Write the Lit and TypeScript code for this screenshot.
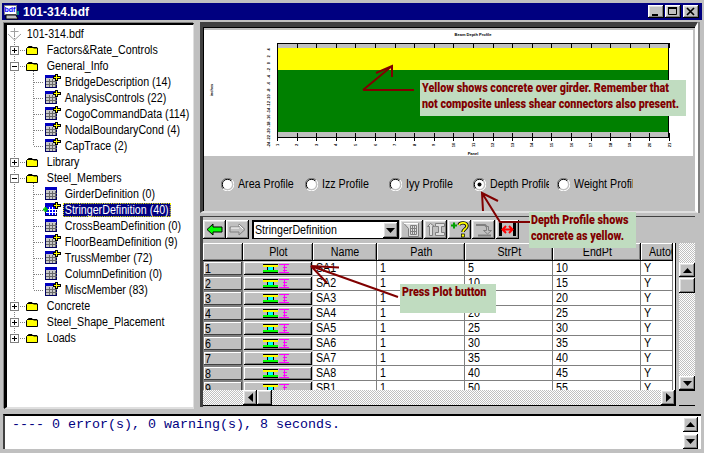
import { LitElement, html, css, svg } from "lit";
import { customElement } from "lit/decorators.js";

type TreeRow = { l: number; t: string; k: string; last?: boolean; sel?: boolean };

const TREE: TreeRow[] = [
  { l: 0, t: "101-314.bdf", k: "root" },
  { l: 1, t: "Factors&Rate_Controls", k: "plus" },
  { l: 1, t: "General_Info", k: "minus" },
  { l: 2, t: "BridgeDescription (14)", k: "tp" },
  { l: 2, t: "AnalysisControls (22)", k: "tp" },
  { l: 2, t: "CogoCommandData (114)", k: "tp" },
  { l: 2, t: "NodalBoundaryCond (4)", k: "tp" },
  { l: 2, t: "CapTrace (2)", k: "tp", last: true },
  { l: 1, t: "Library", k: "plus" },
  { l: 1, t: "Steel_Members", k: "minus" },
  { l: 2, t: "GirderDefinition (0)", k: "t" },
  { l: 2, t: "StringerDefinition (40)", k: "s", sel: true },
  { l: 2, t: "CrossBeamDefinition (0)", k: "t" },
  { l: 2, t: "FloorBeamDefinition (9)", k: "tp" },
  { l: 2, t: "TrussMember (72)", k: "tp" },
  { l: 2, t: "ColumnDefinition (0)", k: "t" },
  { l: 2, t: "MiscMember (83)", k: "tp", last: true },
  { l: 1, t: "Concrete", k: "plus" },
  { l: 1, t: "Steel_Shape_Placement", k: "plus" },
  { l: 1, t: "Loads", k: "plus", last: true },
];

const ROWS = [
  ["1", "SA1", "1", "5", "10", "Y"],
  ["2", "SA2", "1", "10", "15", "Y"],
  ["3", "SA3", "1", "15", "20", "Y"],
  ["4", "SA4", "1", "20", "25", "Y"],
  ["5", "SA5", "1", "25", "30", "Y"],
  ["6", "SA6", "1", "30", "35", "Y"],
  ["7", "SA7", "1", "35", "40", "Y"],
  ["8", "SA8", "1", "40", "45", "Y"],
  ["9", "SB1", "1", "50", "55", "Y"],
];

const GUIDE = "#808080";

function tableIcon(k: string) {
  const x = 37;
  const blue = k === "s";
  const line = blue ? "#ffffff" : "#686868";
  const cells = [];
  for (let i = 1; i < 4; i++) cells.push(svg`<path d="M${x + 2.5 + i * 3} 5V13" stroke="${line}"/>`);
  for (let i = 1; i < 3; i++) cells.push(svg`<path d="M${x + 2} ${4.5 + i * 3}H${x + 13}" stroke="${line}"/>`);
  return svg`
    <rect x="${x + 1.5}" y="1.5" width="11" height="12" fill="${blue ? "#0000ff" : "#c8c8c8"}" stroke="#000060"/>
    <rect x="${x + 1}" y="1" width="12" height="3" fill="#0000c0"/>
    ${cells}
    ${k !== "t"
      ? svg`<path d="M${x + 9} 3.500H${x + 17}M${x + 12.5} 0V7" stroke="#000" stroke-width="3"/><path d="M${x + 10} 3.500H${x + 16}M${x + 12.5} 1V6" stroke="#ffff00"/>`
      : ""}
    ${k === "s"
      ? svg`<path d="M${x - 1} 7.500H${x + 4}M${x + 1.5} 5V10" stroke="#00c000" stroke-width="2"/>`
      : ""}
  `;
}

function folder() {
  return svg`<path d="M19.500 12.500V6.500L21.500 4.500H25L26.500 6H30.500V12.500Z" fill="#ffff00" stroke="#000"/><path d="M20 5.500H30" stroke="#000" stroke-width="1"/>`;
}

function treeGlyph(r: TreeRow, i: number) {
  const n = TREE.length;
  const h = 16;
  const first = i === 0;
  const lastRow = i === n - 1;
  const parts = [];
  parts.push(svg`<path d="M7.500 ${first ? 10 : 0}V${lastRow ? 8 : h}" stroke="${GUIDE}" stroke-dasharray="1 1"/>`);
  if (r.l === 0) {
    parts.push(svg`<path d="M7.500 2V10M3.500 5.500H11.500M1 8L7.500 14L14 8" fill="none" stroke="#a0a0a0"/>`);
  }
  if (r.l === 1) {
    parts.push(svg`<path d="M11 8.500H19" stroke="${GUIDE}" stroke-dasharray="1 1"/>`);
    parts.push(svg`<rect x="3.500" y="4.500" width="8" height="8" fill="#fff" stroke="#808080"/>`);
    parts.push(svg`<path d="M5 8.500H10" stroke="#000"/>`);
    if (r.k === "plus") parts.push(svg`<path d="M7.500 6V11" stroke="#000"/>`);
    parts.push(folder());
    if (r.k === "minus") parts.push(svg`<path d="M26.500 13V16" stroke="${GUIDE}" stroke-dasharray="1 1"/>`);
  }
  if (r.l === 2) {
    parts.push(svg`<path d="M26.500 0V${r.last ? 8 : h}M27 8.500H37" stroke="${GUIDE}" stroke-dasharray="1 1"/>`);
    parts.push(tableIcon(r.k));
  }
  return svg`<svg class="glyph l${r.l}" viewBox="0 0 ${[18, 38, 56][r.l]} 16">${parts}</svg>`;
}

function plotIcon() {
  return html`<svg class="pi" viewBox="0 0 27 9" shape-rendering="crispEdges">
    <rect x="0" y="0" width="15" height="1" fill="#000"/>
    <rect x="0" y="1" width="15" height="2" fill="#ffff00"/>
    <rect x="5" y="3" width="5" height="3" fill="#00ffff"/>
    <path d="M4.500 3V6M10.500 3V6" stroke="#000"/>
    <rect x="0" y="6" width="15" height="2" fill="#00ff00"/>
    <rect x="0" y="8" width="15" height="1" fill="#000"/>
    <path d="M16 0.500H26M16 8.500H26M21.500 1V8M19.500 3H23.500M19.500 6H23.500" fill="none" stroke="#ff00ff"/>
  </svg>`;
}

function radio(on: boolean) {
  return html`<svg class="rd" viewBox="0 0 13 13">
    <path d="M2 11A6 6 0 0 1 11 2" fill="none" stroke="#808080"/>
    <path d="M2.800 10.200A5 5 0 0 1 10.200 2.800" fill="none" stroke="#000"/>
    <circle cx="6.500" cy="6.500" r="4.500" fill="#fff"/>
    <path d="M11 2A6 6 0 0 1 2 11" fill="none" stroke="#fff"/>
    ${on ? svg`<circle cx="6.500" cy="6.500" r="2" fill="#000"/>` : ""}
  </svg>`;
}

function chart() {
  const X0 = 73, X1 = 465, Y0 = 13, Y1 = 108;
  const xs = Array.from({ length: 21 }, (_, i) => X0 + (i * (X1 - X0)) / 20);
  const ys = Array.from({ length: 15 }, (_, i) => 18 + i * 6.8);
  return html`<svg class="chart" viewBox="0 0 489 126">
    <rect x="${X0}" y="${Y0}" width="${X1 - X0}" height="${Y1 - Y0}" fill="#c0c0c0"/>
    <rect x="${X0}" y="18" width="${X1 - X0}" height="22" fill="#ffff00"/>
    <rect x="${X0}" y="40" width="${X1 - X0}" height="62" fill="#008000"/>
    <path d="M${X0} ${Y0 + 0.5}H${X1}M${X1 - 0.5} ${Y0}V${Y1}M${X0} ${Y1 - 0.5}H${X1}M${X0 + 0.5} ${Y0}V${Y1}" stroke="#000" fill="none"/>
    ${xs.map((x) => svg`<path d="M${Math.round(x) + 0.5} ${Y0}V${Y0 + 5}M${Math.round(x) + 0.5} ${Y1 - 5}V${Y1 + 3}" stroke="#000"/>`)}
    ${ys.map((y, i) => svg`<text class="tick" transform="translate(66 ${y + 1.5}) rotate(-90)" text-anchor="middle">${4 - i * 2}</text>`)}
    ${xs.map((x, i) => svg`<text class="tick" transform="translate(${x + 1.5} 115) rotate(-90)" text-anchor="middle">${i + 1}</text>`)}
    <text class="tick" x="269" y="6" text-anchor="middle">Beam Depth Profile</text>
    <text class="tick" x="269" y="125" text-anchor="middle">Panel</text>
    <text class="tick" transform="translate(9 60) rotate(-90)" text-anchor="middle">inches</text>
  </svg>`;
}

const TOOL = {
  back: html`<svg viewBox="0 0 23 19"><path d="M4 9.500L10 4V7H19V12H10V15Z" fill="#00ff00" stroke="#000"/></svg>`,
  fwd: html`<svg viewBox="0 0 23 19"><path d="M19 9.500L13 4V7H4V12H13V15Z" fill="#c0c0c0" stroke="#808080"/><path d="M5 8H13M13 5L17 9" stroke="#fff" fill="none"/></svg>`,
  grid: html`<svg viewBox="0 0 23 19"><path d="M4 3.500H18.500V16.500H8.500V8.500Z" fill="#dfdfdf" stroke="#808080"/><path d="M10.500 5.500H16.500V14.500H10.500ZM12.500 5.500V14.500M14.500 5.500V14.500M10.500 8.500H16.500M10.500 11.500H16.500" fill="none" stroke="#808080"/><path d="M4 3.500H18" stroke="#fff"/></svg>`,
  beam: html`<svg viewBox="0 0 23 19"><path d="M6.500 3.500L3.500 6.500H5.500V15.500H8.500V6.500H10.500ZM11.500 3.500H20.500V6.500H17.500V12.500H20.500V15.500H11.500V12.500H14.500V6.500H11.500Z" fill="#dfdfdf" stroke="#808080"/></svg>`,
  help: html`<svg viewBox="0 0 23 19"><path d="M3 5.500H9M6 2.500V8.500" stroke="#00a000" stroke-width="2"/><path d="M11 5C12 2 19 2 19 6C19 9 15 9 15 12" fill="none" stroke="#000" stroke-width="3.400"/><path d="M11 5C12 2 19 2 19 6C19 9 15 9 15 12" fill="none" stroke="#ffff00" stroke-width="1.600"/><rect x="13.500" y="14" width="3" height="3" fill="#ffff00" stroke="#000" stroke-width="0.700"/></svg>`,
  go: html`<svg viewBox="0 0 23 19"><path d="M4 5H13L16 8" fill="none" stroke="#808080" stroke-width="2"/><path d="M14.500 6.500V10.500H11.500L15.500 14L19.500 10.500H16.500V6.500Z" fill="#c0c0c0" stroke="#808080"/><path d="M6 15.500H19" stroke="#808080" stroke-width="2"/></svg>`,
  span: html`<svg viewBox="0 0 23 19"><path d="M4.500 3V16M18.500 3V16" stroke="#000" stroke-width="3"/><path d="M7 9.500H16M10 6L6.500 9.500L10 13M13 6L16.500 9.500L13 13" fill="none" stroke="#ff0000" stroke-width="2"/></svg>`,
};

const UP = html`<svg class="ar" viewBox="0 0 9 5"><path d="M4.500 0L9 5H0Z"/></svg>`;
const DOWN = html`<svg class="ar" viewBox="0 0 9 5"><path d="M0 0H9L4.500 5Z"/></svg>`;
const LEFT = html`<svg class="ah" viewBox="0 0 5 9"><path d="M5 0V9L0 4.500Z"/></svg>`;
const RIGHT = html`<svg class="ah" viewBox="0 0 5 9"><path d="M0 0V9L5 4.500Z"/></svg>`;

@customElement("app-root")
export class AppRoot extends LitElement {
  static styles = css`
    :host {
      display: block;
      position: relative;
      width: 704px;
      height: 453px;
      overflow: hidden;
      background: #c0c0c0;
      font-family: "Liberation Sans", Arial, sans-serif;
      font-size: 12px;
      color: #000;
    }
    .raised {
      background: #c0c0c0;
      box-shadow: inset -1px -1px 0 #000, inset 1px 1px 0 #fff, inset -2px -2px 0 #808080, inset 2px 2px 0 #dfdfdf;
    }
    .nw { display: inline-block; transform: scaleX(0.89); transform-origin: left center; white-space: nowrap; }
    .nc { display: inline-block; transform: scaleX(0.89); white-space: nowrap; }
    .title {
      height: 17px;
      margin: 3px 2px 0;
      background: #000080;
      color: #fff;
      font-weight: bold;
      font-size: 12px;
      display: flex;
      align-items: center;
    }
    .title svg.app { width: 16px; height: 16px; margin: 0 4px 0 1px; flex: none; }
    .title .name { flex: 1; }
    .wbtn { width: 16px; height: 13px; flex: none; }
    .wbtn svg { width: 16px; height: 13px; display: block; }
    .wbtn.max { margin-left: 1px; }
    .wbtn.close { margin: 0 3px 0 2px; }
    .body { display: flex; height: 392px; margin-top: 2px; }
    .tree {
      box-sizing: border-box;
      width: 190px;
      height: 386px;
      margin: 1px 0 0 4px;
      border-style: solid;
      border-width: 2px 1px 2px 3px;
      border-color: #000 #dfdfdf #dfdfdf #000;
      background: #fff;
      padding-top: 1px;
      overflow: hidden;
      box-shadow: -1px -1px 0 #808080;
    }
    .row { display: flex; height: 16px; align-items: center; white-space: nowrap; }
    .glyph { height: 16px; flex: none; display: block; overflow: visible; }
    .glyph.l0 { width: 18px; }
    .glyph.l1 { width: 38px; }
    .glyph.l2 { width: 56px; }
    .lbl { padding: 0 2px; line-height: 14px; height: 14px; display: inline-block; transform: scaleX(0.89); transform-origin: left center; }
    .lbl.sel { background: #000080; color: #fff; outline: 1px dotted #ffff00; outline-offset: -1px; }
    .right { box-sizing: border-box; width: 500px; margin-left: 6px; display: flex; flex-direction: column; }
    .upper {
      box-sizing: border-box;
      height: 191px;
      border-style: solid;
      border-width: 5px 3px 2px 3px;
      border-color: #404040 #fff #dfdfdf #404040;
      display: flex;
      flex-direction: column;
      box-shadow: inset 1px 1px 0 #000, 2px 0 0 #808080;
      padding: 3px 2px 0 1px;
      margin-right: 2px;
    }
    .plot { height: 126px; background: #fff; flex: none; }
    .chart { width: 489px; height: 126px; display: block; }
    .tick { font-family: "Liberation Sans", sans-serif; font-size: 4px; font-weight: bold; }
    .radios { display: flex; padding: 21px 0 0 17px; align-items: center; height: 14px; }
    .radio { display: flex; width: 84px; flex: none; align-items: center; }
    .rd { width: 13px; height: 13px; flex: none; display: block; }
    .radio .cap { margin-left: 4px; width: 59px; overflow: hidden; white-space: nowrap; display: block; }
    .lower {
      box-sizing: border-box;
      margin-top: 3px;
      height: 191px;
      margin-right: 5px;
      border-style: solid;
      border-width: 1px 0 0 3px;
      border-color: #404040;
      display: flex;
      flex-direction: column;
      padding-top: 3px;
    }
    .toolbar { display: flex; height: 21px; align-items: stretch; padding-bottom: 2px; flex: none; }
    .tools { display: flex; gap: 1px; }
    .tb { height: 19px; width: 23px; flex: none; display: block; }
    .tb svg { width: 100%; height: 100%; display: block; }
    .combo {
      box-sizing: border-box;
      width: 147px;
      margin: 0 1px 0 3px;
      height: 19px;
      background: #fff;
      border: 1px solid #000;
      border-top-width: 2px;
      border-left-width: 2px;
      display: flex;
      align-items: center;
      flex: none;
      padding-left: 1px;
    }
    .combo .cv { flex: 1; min-width: 0; }
    .combo .dd { width: 15px; height: 16px; display: flex; align-items: center; justify-content: center; flex: none; }
    .ar { width: 9px; height: 5px; display: block; }
    .ah { width: 5px; height: 9px; display: block; }
    .gridwrap { display: flex; flex: 1; min-height: 0; }
    .gridcol { width: 473px; flex: none; display: flex; flex-direction: column; border-bottom: 1px solid #000; border-right: 1px solid #000; box-sizing: border-box; height: 163px; }
    .grid {
      height: 147px;
      overflow: hidden;
      display: grid;
      grid-template-columns: 40px 70px 64px 88px 88px 88px 32px;
      grid-auto-rows: 15px;
      grid-template-rows: 18px;
      background: #fff;
      flex: none;
    }
    .hd, .rh {
      box-sizing: border-box;
      background: #c0c0c0;
      display: flex;
      align-items: center;
      box-shadow: inset -1px -1px 0 #000, inset 1px 1px 0 #fff, inset -2px -2px 0 #808080;
      white-space: nowrap;
      overflow: hidden;
    }
    .hd { justify-content: center; }
    .hd.clip { justify-content: flex-start; padding-left: 8px; }
    .rh { padding-left: 2px; box-shadow: inset 0 0 0 1px #808080, inset -2px -2px 0 #404040, inset 2px 2px 0 #fff; }
    .pb { box-sizing: border-box; border: 1px solid #c0c0c0; display: flex; align-items: center; justify-content: center; background: #c0c0c0; box-shadow: inset -1px -1px 0 #000, inset 1px 1px 0 #fff, inset -2px -2px 0 #808080; }
    .pi { width: 27px; height: 9px; display: block; margin-left: -4px; }
    .cell { box-sizing: border-box; border-right: 1px solid #808080; border-bottom: 1px solid #808080; padding-left: 3px; line-height: 14px; white-space: nowrap; overflow: hidden; }
    .dither { background-color: #c0c0c0; background-image: repeating-conic-gradient(#fff 0 25%, #c0c0c0 0 50%); background-size: 2px 2px; }
    .hscroll { display: flex; height: 15px; flex: none; }
    .hscroll .sp1 { width: 40px; flex: none; }
    .hscroll .sp2 { flex: 1; }
    .sb { width: 14px; flex: none; display: flex; align-items: center; justify-content: center; }
    .thumb { width: 15px; flex: none; }
    .vs { margin-left: 3px; width: 16px; box-sizing: border-box; height: 163px; display: flex; flex-direction: column; flex: none; border-bottom: 1px solid #000; }
    .vs .d1 { height: 20px; flex: none; }
    .vs .d2 { flex: 1; }
    .vb { height: 14px; flex: none; display: flex; align-items: center; justify-content: center; }
    .vt { height: 15px; flex: none; margin-top: 1px; }
    .vc { height: 15px; flex: none; box-shadow: inset 0 1px 0 #000; }
    .output {
      position: absolute;
      left: 3px; right: 3px; top: 414px; height: 35px;
      box-sizing: border-box;
      background: #fff;
      border-top: 2px solid #000;
      border-left: 2px solid #404040;
      display: flex;
      padding: 0 3px 0 7px;
    }
    .output pre { margin: 0; flex: 1; font: 13.33px/17px "Liberation Mono", monospace; color: #000080; }
    .outsb { width: 15px; display: flex; flex-direction: column; gap: 2px; padding-top: 1px; flex: none; }
    .outsb .vb { height: 15px; }
    .note {
      position: absolute;
      background: #c0dcc0;
      color: #800000;
      font-family: "Roboto", "Liberation Sans", sans-serif;
      font-weight: 900;
      font-size: 12.5px;
      line-height: 16px;
      white-space: nowrap;
      box-sizing: border-box;
      padding: 0 2px;
    }
    .note span { display: block; transform: scaleX(0.86); transform-origin: left center; }
    .n1 { left: 420px; top: 80px; width: 266px; height: 36px; }
    .n2 { left: 529px; top: 212px; width: 107px; height: 36px; }
    .n3 { left: 400px; top: 284px; width: 96px; height: 29px; }
    .arrows { position: absolute; inset: 0; width: 704px; height: 453px; pointer-events: none; }
  `;

  render() {
    const head = ["", "Plot", "Name", "Path", "StrPt", "EndPt", "AutoOpt"];
    return html`
      <div class="title">
        <svg class="app" viewBox="0 0 16 16">
          <rect x="1.500" y="1.500" width="12" height="9" fill="#fff" stroke="#808080"/>
          <text x="1.500" y="8" font-size="7" font-family="Liberation Sans" fill="#0000ff">bdf</text>
          <path d="M3 11H13L15 15H3Z" fill="#c0c0c0" stroke="#000"/>
          <path d="M14 7H16V11H14Z" fill="#008080"/>
        </svg>
        <span class="name">101-314.bdf</span>
        <div class="wbtn raised"><svg viewBox="0 0 16 13"><path d="M4 10H10" stroke="#000" stroke-width="2"/></svg></div>
        <div class="wbtn max raised"><svg viewBox="0 0 16 13"><path d="M3.500 3.500H11.500V9.500H3.500Z" fill="none" stroke="#000"/><path d="M3 3H12" stroke="#000" stroke-width="2"/></svg></div>
        <div class="wbtn close raised"><svg viewBox="0 0 16 13"><path d="M4 3L11 10M11 3L4 10" stroke="#000" stroke-width="1.700"/></svg></div>
      </div>
      <div class="body">
        <div class="tree">
          ${TREE.map(
            (r, i) => html`<div class="row">${treeGlyph(r, i)}<span class="lbl ${r.sel ? "sel" : ""}">${r.t}</span></div>`
          )}
        </div>
        <div class="right">
          <div class="upper">
            <div class="plot">${chart()}</div>
            <div class="radios">
              ${["Area Profile", "Izz Profile", "Iyy Profile", "Depth Profile", "Weight Profile"].map(
                (t, i) => html`<div class="radio">${radio(i === 3)}<span class="cap"><span class="nw">${t}</span></span></div>`
              )}
            </div>
          </div>
          <div class="lower">
            <div class="toolbar">
              <div class="tb raised">${TOOL.back}</div>
              <div class="tb raised">${TOOL.fwd}</div>
              <div class="combo"><span class="cv"><span class="nw">StringerDefinition</span></span><div class="dd raised">${DOWN}</div></div>
              <div class="tools">
                <div class="tb raised">${TOOL.grid}</div>
                <div class="tb raised">${TOOL.beam}</div>
                <div class="tb raised">${TOOL.help}</div>
                <div class="tb raised">${TOOL.go}</div>
                <div class="tb raised">${TOOL.span}</div>
              </div>
            </div>
            <div class="gridwrap">
              <div class="gridcol">
                <div class="grid">
                  ${head.map(
                    (h, i) => html`<div class="hd ${i === 6 ? "clip" : ""}"><span class="${i === 6 ? "nw" : "nc"}">${h}</span></div>`
                  )}
                  ${ROWS.map(
                    (r) => html`
                      <div class="rh"><span class="nw">${r[0]}</span></div>
                      <div class="pb">${plotIcon()}</div>
                      ${r.slice(1).map((c) => html`<div class="cell"><span class="nw">${c}</span></div>`)}
                    `
                  )}
                </div>
                <div class="hscroll">
                  <div class="sp1 dither"></div>
                  <div class="sb raised">${LEFT}</div>
                  <div class="thumb raised"></div>
                  <div class="sp2 dither"></div>
                  <div class="sb raised">${RIGHT}</div>
                </div>
              </div>
              <div class="vs">
                <div class="d1 dither"></div>
                <div class="vb raised">${UP}</div>
                <div class="vt raised"></div>
                <div class="d2 dither"></div>
                <div class="vb raised">${DOWN}</div>
                <div class="vc"></div>
              </div>
            </div>
          </div>
        </div>
      </div>
      <div class="output">
        <pre>---- 0 error(s), 0 warning(s), 8 seconds.</pre>
        <div class="outsb">
          <div class="vb raised">${UP}</div>
          <div class="vb raised">${DOWN}</div>
        </div>
      </div>
      <div class="note n1"><span>Yellow shows concrete over girder. Remember that</span><span>not composite unless shear connectors also present.</span></div>
      <div class="note n2"><span>Depth Profile shows</span><span>concrete as yellow.</span></div>
      <div class="note n3"><span>Press Plot button</span></div>
      <svg class="arrows" viewBox="0 0 704 453">
        <g fill="none" stroke="#800000" stroke-width="2">
          <path d="M363 90H414M363 90L392 66M376 73L392 66L392 77"/>
          <path d="M530 222H500L482 193M498 201L482 193L483 211"/>
          <path d="M398 297L311 266L339 267.500M311 266L327 283"/>
        </g>
      </svg>
    `;
  }
}
